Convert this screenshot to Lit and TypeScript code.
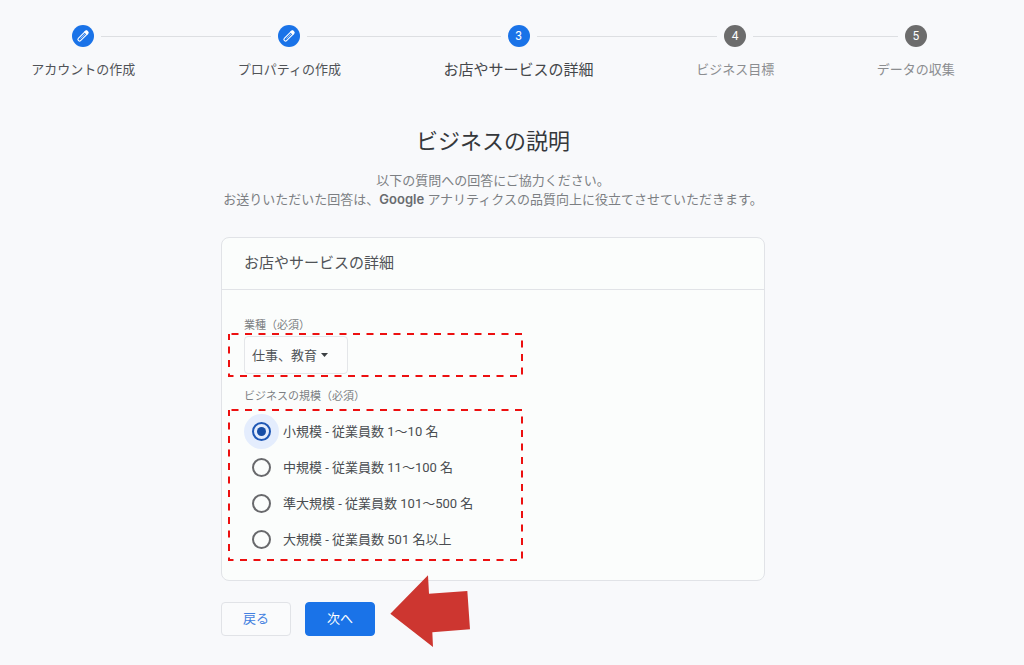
import { LitElement, html, css, svg } from "lit";
import { customElement, property, state } from "lit/decorators.js";
import { classMap } from "lit/directives/class-map.js";

type StepStatus = "done" | "current" | "upcoming";

interface Step {
  label: string;
  status: StepStatus;
}

const STEPS: Step[] = [
  { label: "アカウントの作成", status: "done" },
  { label: "プロパティの作成", status: "done" },
  { label: "お店やサービスの詳細", status: "current" },
  { label: "ビジネス目標", status: "upcoming" },
  { label: "データの収集", status: "upcoming" },
];

const SIZES = [
  { value: "small", label: "小規模 - 従業員数 1〜10 名" },
  { value: "medium", label: "中規模 - 従業員数 11〜100 名" },
  { value: "large", label: "準大規模 - 従業員数 101〜500 名" },
  { value: "xlarge", label: "大規模 - 従業員数 501 名以上" },
];

const pencil = svg`
  <g transform="rotate(45 11 11)">
    <rect x="9.4" y="5" width="3.2" height="12.4" rx="1.4" fill="none" stroke="#fff" stroke-width="1.1"/>
    <path d="M8.9 7.6V6a2.1 2 0 0 1 4.2 0v1.6z" fill="#fff"/>
    <path d="M11 7.6v7" stroke="#fff" stroke-width=".5"/>
  </g>`;

@customElement("setup-stepper")
export class SetupStepper extends LitElement {
  @property({ attribute: false }) steps: Step[] = [];

  static styles = css`
    :host {
      display: block;
    }
    .steps {
      display: flex;
      list-style: none;
      margin: 0 -52px;
      padding: 0;
    }
    .step {
      flex: 1 1 auto;
      display: flex;
      flex-direction: column;
      gap: 13px;
      color: #505357;
    }
    .track {
      display: flex;
      align-items: center;
      gap: 7px;
    }
    .line {
      flex: 1;
      height: 1px;
      background: #dddfe2;
    }
    .step:first-child .line:first-child,
    .step:last-child .line:last-child {
      background: none;
    }
    .dot {
      display: grid;
      place-items: center;
      width: 22px;
      height: 22px;
      border-radius: 50%;
      background: #1a73e8;
      color: #fff;
      font-size: 12px;
      line-height: 22px;
    }
    .label {
      font-size: 13px;
      line-height: 20px;
      text-align: center;
      white-space: nowrap;
    }
    .current .label {
      font-size: 15px;
      color: #44474a;
    }
    .upcoming .label {
      color: #8b8d90;
    }
    .upcoming .dot {
      background: #6c6c6c;
    }
  `;

  render() {
    return html`
      <ol class="steps">
        ${this.steps.map(
          (step, i) => html`
            <li class=${classMap({ step: true, [step.status]: true })}>
              <div class="track">
                <span class="line"></span>
                <span class="dot">
                  ${step.status === "done"
                    ? html`<svg width="22" height="22" viewBox="0 0 22 22" aria-hidden="true">${pencil}</svg>`
                    : i + 1}
                </span>
                <span class="line"></span>
              </div>
              <span class="label">${step.label}</span>
            </li>
          `
        )}
      </ol>
    `;
  }
}

@customElement("app-root")
export class AppRoot extends LitElement {
  @state() private size = "small";

  static styles = css`
    :host {
      display: block;
      min-height: 100vh;
      box-sizing: border-box;
      overflow: hidden;
      padding: 25px 70px 24px 32px;
      background: #f8f9fb;
      color: #505357;
      font-family: Roboto, "Noto Sans CJK JP", sans-serif;
      font-size: 13px;
    }
    .title {
      margin: 46px 0 14px;
      font-size: 22px;
      line-height: 32px;
      font-weight: 400;
      text-align: center;
      color: #35383b;
    }
    .lead {
      margin: 0 0 28px;
      line-height: 18px;
      text-align: center;
      color: #7c7f83;
    }
    .brand {
      font-family: Inter, sans-serif;
      font-weight: 600;
      color: #686b6f;
    }
    .form {
      max-width: 544px;
      margin: 0 auto;
    }
    .card {
      border: 1px solid #e1e3e7;
      border-radius: 8px;
      background: #fbfdfc;
    }
    .card-title {
      margin: 0;
      padding: 13px 22px 14px;
      border-bottom: 1px solid #e1e3e7;
      font-size: 15px;
      line-height: 24px;
      font-weight: 400;
    }
    .card-body {
      display: flex;
      flex-direction: column;
      gap: 15px;
      padding: 28px 22px 23px;
    }
    .field {
      position: relative;
      margin: 0;
      padding: 0;
      border: 0;
    }
    .caption {
      display: block;
      padding: 0;
      font-size: 11px;
      line-height: 16px;
      color: #7c7f83;
    }
    .picker {
      display: inline-grid;
      align-items: center;
      vertical-align: top;
      margin-top: 2px;
    }
    .select,
    .caret {
      grid-area: 1 / 1;
    }
    .select {
      appearance: none;
      width: 104px;
      height: 38px;
      margin: 0;
      padding: 0 24px 0 7px;
      border: 1px solid #e4e6e9;
      border-radius: 4px;
      background: #fcfdfd;
      color: inherit;
      font: inherit;
    }
    .caret {
      justify-self: end;
      margin-right: 20px;
      pointer-events: none;
    }
    .options {
      position: relative;
      display: grid;
      padding-top: 8px;
    }
    .option {
      display: flex;
      align-items: center;
      gap: 4px;
      height: 36px;
      color: #4a4d51;
    }
    .option-text {
      padding-bottom: 2px;
    }
    .halo {
      display: grid;
      place-items: center;
      width: 35px;
      height: 35px;
      border-radius: 50%;
    }
    .halo.on {
      background: #e4edfd;
    }
    .radio {
      appearance: none;
      display: grid;
      place-items: center;
      box-sizing: border-box;
      width: 19px;
      height: 19px;
      margin: 0;
      border: 2px solid #68696c;
      border-radius: 50%;
    }
    .radio:checked {
      border-color: #1f58b5;
    }
    .radio:checked::before {
      content: "";
      width: 9px;
      height: 9px;
      border-radius: 50%;
      background: #174ea6;
    }
    .mark {
      position: absolute;
      left: -16px;
      pointer-events: none;
    }
    .mark-industry {
      top: 15px;
    }
    .mark-size {
      top: 4px;
    }
    .actions {
      position: relative;
      display: flex;
      gap: 14px;
      margin-top: 21px;
    }
    .button {
      width: 70px;
      height: 34px;
      padding: 0 0 3px;
      border: 1px solid #e1e3e7;
      border-radius: 4px;
      background: #fafbfc;
      color: #4280e0;
      font: inherit;
    }
    .button.primary {
      border-color: #1a73e8;
      background: #1a73e8;
      color: #fff;
    }
    .pointer {
      position: absolute;
      left: 167px;
      top: -28px;
      pointer-events: none;
    }
  `;

  /* Dashed outline; the viewBox runs at two units per pixel. */
  private mark(name: string, height: number) {
    return html`
      <svg class="mark ${name}" width="295" height=${height} viewBox="0 0 590 ${height * 2}" aria-hidden="true">
        <rect x="2" y="2" width="586" height=${height * 2 - 4} fill="none" stroke="#ec1010"
          stroke-width="4" stroke-dasharray="14 13" stroke-dashoffset="-5" />
      </svg>
    `;
  }

  render() {
    return html`
      <setup-stepper .steps=${STEPS}></setup-stepper>
      <h1 class="title">ビジネスの説明</h1>
      <p class="lead">
        以下の質問への回答にご協力ください。<br />
        お送りいただいた回答は、<span class="brand">Google</span> アナリティクスの品質向上に役立てさせていただきます。
      </p>
      <form class="form" @submit=${(e: Event) => e.preventDefault()}>
        <section class="card">
          <h2 class="card-title">お店やサービスの詳細</h2>
          <div class="card-body">
            <div class="field">
              <label class="caption" for="industry">業種（必須）</label>
              <div class="picker">
                <select class="select" id="industry">
                  <option>仕事、教育</option>
                </select>
                <svg class="caret" width="7" height="4" viewBox="0 0 7 4" aria-hidden="true">
                  <path d="M0 0h7L3.5 4z" fill="#3c4043" />
                </svg>
              </div>
              ${this.mark("mark-industry", 44)}
            </div>
            <fieldset class="field">
              <legend class="caption">ビジネスの規模（必須）</legend>
              <div class="options">
                ${SIZES.map(
                  (s) => html`
                    <label class="option">
                      <span class=${classMap({ halo: true, on: this.size === s.value })}>
                        <input
                          class="radio"
                          type="radio"
                          name="size"
                          .value=${s.value}
                          .checked=${this.size === s.value}
                          @change=${() => (this.size = s.value)}
                        />
                      </span>
                      <span class="option-text">${s.label}</span>
                    </label>
                  `
                )}
                ${this.mark("mark-size", 152)}
              </div>
            </fieldset>
          </div>
        </section>
        <div class="actions">
          <button class="button" type="button">戻る</button>
          <button class="button primary" type="submit">次へ</button>
          <svg class="pointer" width="84" height="76" viewBox="0 0 252 228" aria-hidden="true">
            <path d="M7 119 120 4l3 55 115-8 8 115-113 9 2 44z" fill="#cd3630" />
          </svg>
        </div>
      </form>
    `;
  }
}
